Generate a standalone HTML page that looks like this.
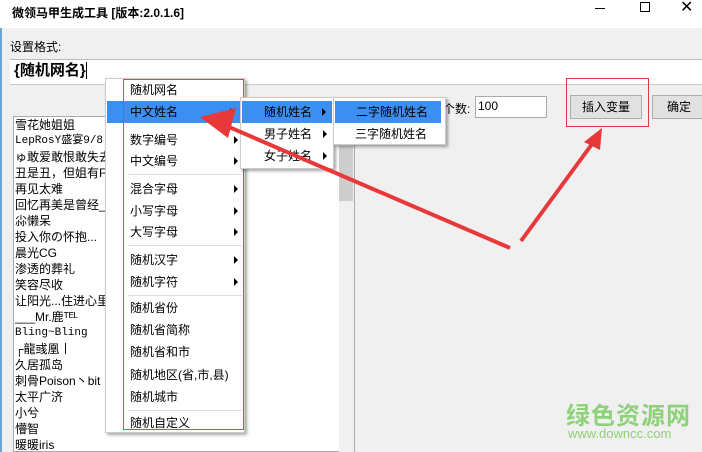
<!DOCTYPE html>
<html style="width:702px;height:452px;overflow:hidden"><head><meta charset="utf-8">
<style>
*{margin:0;padding:0;box-sizing:border-box}
body{width:702px;height:452px;overflow:hidden;position:relative;background:#f0f0f0;font-family:"Liberation Sans","Noto Sans CJK SC","WenQuanYi Zen Hei",sans-serif;font-size:12px;color:#000}
.a{position:absolute;white-space:nowrap}
.menu{position:absolute;background:#fff;border:1px solid #ccc;box-shadow:2px 2px 3px rgba(0,0,0,.35)}
.it{position:absolute;left:0;right:0;height:22px;line-height:22px;font-size:12px}
.hl{background:#3b8ff2}
.arr{position:absolute;right:6px;top:7px;width:0;height:0;border-left:4px solid #000;border-top:4px solid transparent;border-bottom:4px solid transparent}
.sep{position:absolute;left:22px;right:2px;height:1px;background:#ddd}
.list div{height:16px;line-height:16px;font-size:12px;overflow:hidden}
</style></head><body>
<div class="a" style="left:0;top:0;width:702px;height:28px;background:#fff"></div>
<div class="a" style="left:0;top:28px;width:2px;height:424px;background:#6aa6d8"></div>
<div class="a" style="left:12px;top:4px;font-size:12px;font-weight:bold">微领马甲生成工具 [版本:2.0.1.6]</div>
<div class="a" style="left:595px;top:8px;width:10px;height:1px;background:#000"></div>
<div class="a" style="left:640px;top:2px;width:10px;height:10px;border:1px solid #000"></div>
<div class="a" style="left:680px;top:-3px;font-size:16px">✕</div>
<div class="a" style="left:10px;top:38px">设置格式:</div>
<div class="a" style="left:10px;top:59px;width:692px;height:26px;background:#fff;border-top:1px solid #bbb;border-bottom:1px solid #ccc"></div>
<div class="a" style="left:14px;top:60px;font-size:15px;font-weight:bold;line-height:22px">{随机网名}</div>
<div class="a" style="left:86px;top:62px;width:1px;height:17px;background:#000"></div>
<div class="a" style="left:13px;top:116px;width:327px;height:336px;background:#fff;border:1px solid #aaa;overflow:hidden">
<div class="list" style="position:absolute;left:1px;top:0px">
<div>雪花她姐姐</div><div style="font-family:'Liberation Mono','Noto Sans CJK SC',monospace;font-size:11px">LepRosY盛宴9/8</div><div>ゅ敢爱敢恨敢失去</div><div>丑是丑，但姐有F</div><div>再见太难</div><div>回忆再美是曾经_</div><div>尛懒呆</div><div>投入你の怀抱...</div><div>晨光CG</div><div>渗透的葬礼</div><div>笑容尽收</div><div>让阳光...住进心里</div><div>___Mr.鹿ᵀᴱᴸ</div><div style="font-family:'Liberation Mono',monospace;font-size:11px">Bling~Bling</div><div>┌龍彧凰丨</div><div>久居孤岛</div><div>刺骨Poison丶bit</div><div>太平广济</div><div>小兮</div><div>懵智</div><div>暖暖iris</div>
</div></div>
<div class="a" style="left:339px;top:116px;width:15px;height:336px;background:#f0f0f0"></div>
<div class="a" style="left:339px;top:146px;width:14px;height:55px;background:#cdcdcd"></div>
<div class="a" style="left:354px;top:116px;width:1px;height:336px;background:#aaa"></div>
<div class="a" style="left:443px;top:100px">个数:</div>
<div class="a" style="left:475px;top:96px;width:72px;height:22px;background:#fff;border:1px solid #aaa;padding-left:2px;line-height:18px">100</div>
<div class="a" style="left:570px;top:95px;width:72px;height:24px;background:#e1e1e1;border:1px solid #adadad;text-align:center;line-height:22px">插入变量</div>
<div class="a" style="left:652px;top:95px;width:54px;height:24px;background:#e1e1e1;border:1px solid #adadad;padding-left:14px;line-height:22px">确定</div>
<div class="a" style="left:566px;top:78px;width:83px;height:49px;border:1px solid #e0393c"></div>

<div class="menu" style="left:105px;top:78px;width:140px;height:355px">
<div class="it" style="top:0;padding-left:24px">随机网名</div>
<div class="it hl" style="top:22px;left:1px;right:4px;padding-left:23px">中文姓名<span class="arr"></span></div>
<div class="it" style="top:50px;padding-left:24px">数字编号<span class="arr"></span></div>
<div class="it" style="top:71px;padding-left:24px">中文编号<span class="arr"></span></div>
<div class="sep" style="top:95px"></div>
<div class="it" style="top:99px;padding-left:24px">混合字母<span class="arr"></span></div>
<div class="it" style="top:121px;padding-left:24px">小写字母<span class="arr"></span></div>
<div class="it" style="top:142px;padding-left:24px">大写字母<span class="arr"></span></div>
<div class="sep" style="top:166px"></div>
<div class="it" style="top:170px;padding-left:24px">随机汉字<span class="arr"></span></div>
<div class="it" style="top:192px;padding-left:24px">随机字符<span class="arr"></span></div>
<div class="sep" style="top:216px"></div>
<div class="it" style="top:218px;padding-left:24px">随机省份</div>
<div class="it" style="top:240px;padding-left:24px">随机省简称</div>
<div class="it" style="top:262px;padding-left:24px">随机省和市</div>
<div class="it" style="top:285px;padding-left:24px">随机地区(省,市,县)</div>
<div class="it" style="top:307px;padding-left:24px">随机城市</div>
<div class="sep" style="top:331px"></div>
<div class="it" style="top:333px;padding-left:24px">随机自定义</div>
</div>
<div class="a" style="left:123px;top:79px;width:121px;height:351px;border:1px solid #d9484c"></div>

<div class="menu" style="left:240px;top:97px;width:94px;height:72px">
<div class="it hl" style="top:3px;left:1px;right:1px;padding-left:22px">随机姓名<span class="arr"></span></div>
<div class="it" style="top:25px;padding-left:23px">男子姓名<span class="arr"></span></div>
<div class="it" style="top:47px;padding-left:23px">女子姓名<span class="arr"></span></div>
</div>
<div class="menu" style="left:333px;top:97px;width:113px;height:48px">
<div class="it hl" style="top:3px;left:1px;right:4px;padding-left:21px">二字随机姓名</div>
<div class="it" style="top:25px;padding-left:21px">三字随机姓名</div>
</div>

<svg class="a" style="left:0;top:0" width="702" height="452">
<line x1="510" y1="248" x2="222" y2="124" stroke="#e8393a" stroke-width="4"/>
<polygon points="200,117 236,108 228,138" fill="#e8393a"/>
<line x1="521" y1="241" x2="595" y2="140" stroke="#e8393a" stroke-width="4"/>
<polygon points="602,128 584,142 600,150" fill="#e8393a"/>
</svg>

<div class="a" style="left:566px;top:396px;font-size:24px;font-weight:bold;color:#8fd07a;letter-spacing:1px">绿色资源网</div>
<div class="a" style="left:568px;top:426px;font-size:13px;color:#8fd07a">www.downcc.com</div>
</body></html>
